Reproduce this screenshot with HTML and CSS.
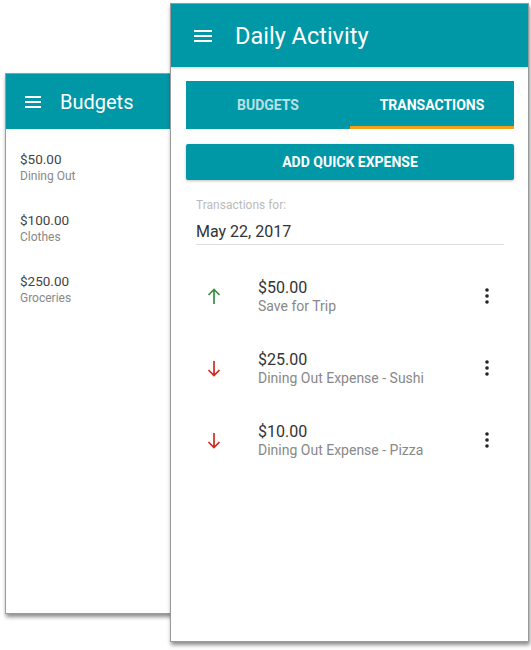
FILE: index.html
```html
<!DOCTYPE html>
<html>
<head>
<meta charset="utf-8">
<link rel="stylesheet" href="styles.css">
</head>
<body>
<div class="desk">
  <div class="phone phone-back">
    <header class="bar bar-small">
      <svg class="menu menu-small" viewBox="0 0 16 12"><rect x="0" y="0" width="16" height="2"/><rect x="0" y="5" width="16" height="2"/><rect x="0" y="10" width="16" height="2"/></svg>
      <h1 class="title-small">Budgets</h1>
    </header>
    <ul class="budgets">
      <li><div class="b-amt">$50.00</div><div class="b-cat">Dining Out</div></li>
      <li><div class="b-amt">$100.00</div><div class="b-cat">Clothes</div></li>
      <li><div class="b-amt">$250.00</div><div class="b-cat">Groceries</div></li>
    </ul>
  </div>

  <div class="phone phone-front">
    <header class="bar bar-large">
      <svg class="menu menu-large" viewBox="0 0 18 12"><rect x="0" y="0" width="18" height="2"/><rect x="0" y="5" width="18" height="2"/><rect x="0" y="10" width="18" height="2"/></svg>
      <h1 class="title-large">Daily Activity</h1>
    </header>
    <main class="content">
      <nav class="tabs">
        <div class="tab">BUDGETS</div>
        <div class="tab tab-active">TRANSACTIONS</div>
      </nav>
      <button class="quick">ADD QUICK EXPENSE</button>
      <div class="field">
        <div class="field-label">Transactions for:</div>
        <div class="field-value">May 22, 2017</div>
      </div>
      <ul class="tx">
        <li class="tx-row">
          <svg class="arrow up" viewBox="0 0 14 17"><path d="M7 1.5V16M1.5 7L7 1.5L12.5 7"/></svg>
          <div class="tx-text"><div class="tx-amt">$50.00</div><div class="tx-desc">Save for Trip</div></div>
          <svg class="more" viewBox="0 0 4 16"><circle cx="2" cy="2" r="1.8"/><circle cx="2" cy="8" r="1.8"/><circle cx="2" cy="14" r="1.8"/></svg>
        </li>
        <li class="tx-row">
          <svg class="arrow down" viewBox="0 0 14 17"><path d="M7 1V15.5M1.5 10L7 15.5L12.5 10"/></svg>
          <div class="tx-text"><div class="tx-amt">$25.00</div><div class="tx-desc">Dining Out Expense - Sushi</div></div>
          <svg class="more" viewBox="0 0 4 16"><circle cx="2" cy="2" r="1.8"/><circle cx="2" cy="8" r="1.8"/><circle cx="2" cy="14" r="1.8"/></svg>
        </li>
        <li class="tx-row">
          <svg class="arrow down" viewBox="0 0 14 17"><path d="M7 1V15.5M1.5 10L7 15.5L12.5 10"/></svg>
          <div class="tx-text"><div class="tx-amt">$10.00</div><div class="tx-desc">Dining Out Expense - Pizza</div></div>
          <svg class="more" viewBox="0 0 4 16"><circle cx="2" cy="2" r="1.8"/><circle cx="2" cy="8" r="1.8"/><circle cx="2" cy="14" r="1.8"/></svg>
        </li>
      </ul>
    </main>
  </div>
</div>
</body>
</html>
```

FILE: styles.css
```css
* { box-sizing: border-box; }
html, body { margin: 0; padding: 0; background: #fff; }
body { font-family: Roboto, "Liberation Sans", sans-serif; color: #333; }

.desk { position: relative; width: 531px; height: 650px; overflow: hidden; }

.phone {
  position: absolute;
  background: #fff;
  border: 1px solid #9a9a9a;
  box-shadow: 1px 3px 4px rgba(0,0,0,0.45);
  overflow: hidden;
}
.phone-back { left: 5px; top: 73px; width: 200px; height: 541px; }
.phone-front { left: 170px; top: 3px; width: 359px; height: 639px; }

.bar {
  display: flex;
  align-items: center;
  background: #0097a7;
  color: #fff;
}
.bar-small { height: 55px; padding-left: 19px; }
.bar-large { height: 63px; padding-left: 23px; box-shadow: 0 1px 3px rgba(0,0,0,0.18); position: relative; }

.menu { fill: #fff; display: block; }
.menu-small { width: 16px; height: 12px; }
.menu-large { width: 18px; height: 12px; }

h1 { margin: 0; font-weight: 400; }
.title-small { font-size: 20px; margin-left: 19px; }
.title-large { font-size: 23.5px; margin-left: 23px; }

.budgets { list-style: none; margin: 0; padding: 21px 0 0 14px; display: flex; flex-direction: column; gap: 26px; }
.b-amt { font-size: 13.5px; line-height: 18px; color: #444; }
.b-cat { font-size: 12px; line-height: 17px; color: #888; }

.content { padding: 14px 14px 0 15px; }

.tabs { display: flex; height: 48px; background: #0097a7; }
.tab {
  flex: 1;
  display: flex;
  align-items: center;
  justify-content: center;
  font-size: 14px;
  font-weight: 700;
  color: rgba(255,255,255,0.72);
  border-bottom: 3px solid transparent;
  padding-top: 3px;
}
.tab-active { color: #fff; border-bottom-color: #f5a01a; }

.quick {
  display: block;
  width: 100%;
  margin-top: 15px;
  height: 36px;
  border: 0;
  border-radius: 2px;
  background: #0097a7;
  color: #fff;
  font-family: Roboto, "Liberation Sans", sans-serif;
  font-size: 14px;
  font-weight: 700;
  box-shadow: 0 1px 3px rgba(0,0,0,0.25);
}

.field { margin: 18px 10px 0 10px; border-bottom: 1px solid #ddd; padding-bottom: 2px; }
.field-label { font-size: 12px; line-height: 14px; color: #bbb; }
.field-value { font-size: 16px; line-height: 20px; margin-top: 10px; color: #333; }

.tx { list-style: none; margin: 15px 0 0 0; padding: 0; }
.tx-row { display: flex; align-items: center; height: 72px; padding-left: 21px; }
.arrow { width: 14px; height: 17px; fill: none; stroke-width: 1.7; flex: none; }
.arrow.up { stroke: #3c8f3f; }
.arrow.down { stroke: #d42a1f; }
.tx-text { flex: 1; margin-left: 37px; padding-top: 2px; }
.tx-amt { font-size: 16px; line-height: 19px; color: #333; }
.tx-desc { font-size: 14px; line-height: 19px; color: #888; }
.more { width: 4px; height: 16px; fill: #222; margin-right: 25px; flex: none; }
```
